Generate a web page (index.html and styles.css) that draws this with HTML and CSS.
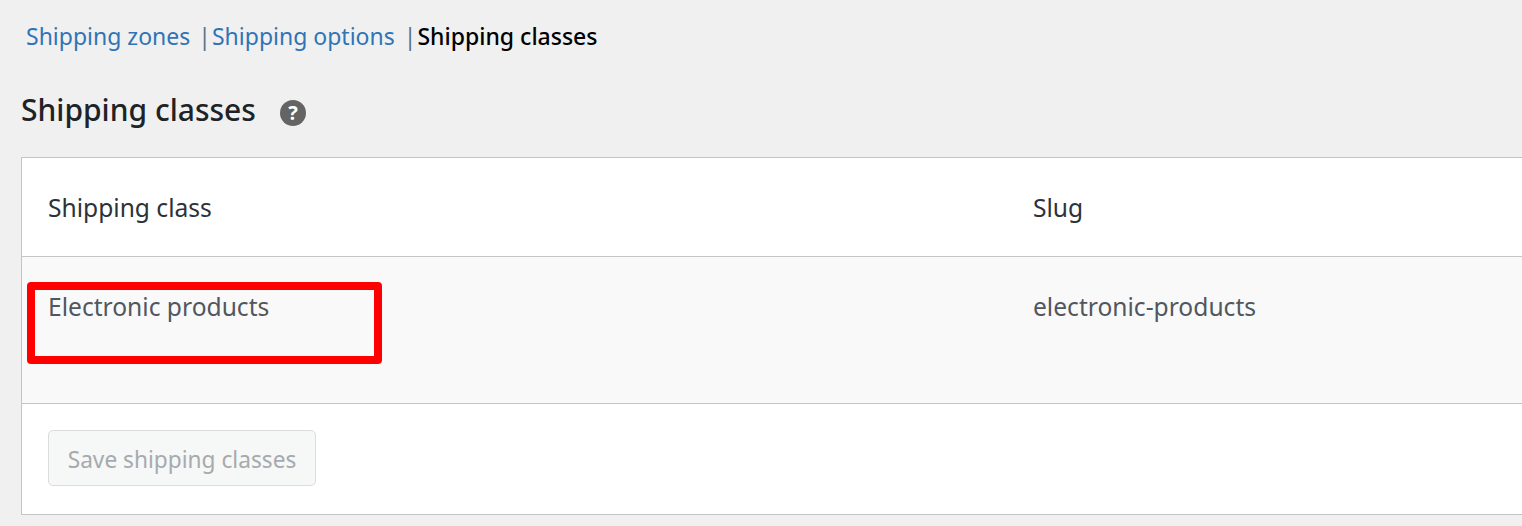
FILE: index.html
```html
<!DOCTYPE html>
<html lang="en">
<head>
<meta charset="utf-8">
<title>Shipping classes</title>
<link rel="stylesheet" href="styles.css">
</head>
<body>
<main class="page">
  <nav class="subnav">
    <a class="subnav-link" href="#">Shipping zones</a>
    <span class="sep sep-first">|</span>
    <a class="subnav-link" href="#">Shipping options</a>
    <span class="sep sep-second">|</span>
    <strong class="current">Shipping classes</strong>
  </nav>
  <header class="heading">
    <h2 class="title">Shipping classes</h2>
    <svg class="help" viewBox="0 0 26 26" aria-hidden="true">
      <circle cx="13" cy="13" r="13" fill="#646464"/>
      <text class="help-mark" x="13" y="20" text-anchor="middle">?</text>
    </svg>
  </header>
  <section class="panel">
    <div class="row row-head">
      <div class="cell cell-name">Shipping class</div>
      <div class="cell">Slug</div>
    </div>
    <div class="row row-body">
      <div class="cell cell-name">Electronic products</div>
      <div class="cell">electronic-products</div>
      <div class="highlight"></div>
    </div>
    <div class="row-foot">
      <button class="save" type="button" disabled>Save shipping classes</button>
    </div>
  </section>
</main>
</body>
</html>
```
FILE: styles.css
```css
* { box-sizing: border-box; }
html, body { margin: 0; height: 100%; }
body {
  width: 1522px;
  height: 526px;
  overflow: hidden;
  background: #f0f0f1;
  font-family: "Noto Sans", "Open Sans", sans-serif;
  font-size: 23px;
  color: #3c434a;
}
.page { padding: 20px 0 0 21px; width: 1500px; }
.subnav { display: flex; align-items: center; height: 34px; padding: 0 0 1px 5px; line-height: 33px; white-space: nowrap; }
.subnav-link { color: #2f74b5; text-decoration: none; }
.sep { color: #5a7288; font-size: 23px; }
.sep-first { margin: 0 1px 0 8px; }
.sep-second { margin: 0 1px 0 9px; }
.current { color: #000; font-weight: 500; }
.heading { display: flex; align-items: center; height: 40px; margin-top: 36px; }
.title { margin: 0; font-size: 30px; font-weight: 500; line-height: 40px; color: #1d2327; }
.help { width: 26px; height: 26px; margin: 5px 0 0 24px; }
.help-mark { font-family: "Noto Sans", sans-serif; font-size: 20px; font-weight: 700; fill: #fff; }
.panel { margin-top: 27px; width: 1501px; background: #fff; border: 1px solid #c3c4c7; border-right: 0; }
.row { position: relative; display: grid; grid-template-columns: 985px 1fr; padding-left: 26px; font-size: 24.6px; }
.row-head { height: 98px; align-items: center; color: #2c3338; }
.row-body { height: 148px; background: #f9f9f9; border-top: 1px solid #c3c4c7; border-bottom: 1px solid #c3c4c7; padding-top: 33px; color: #50575e; line-height: 34px; }
.highlight { position: absolute; left: 5px; top: 25px; width: 355px; height: 82px; border: 8px solid #f00; border-radius: 4px; }
.row-foot { height: 110px; padding: 26px 0 0 26px; }
.save { display: block; width: 268px; height: 56px; padding: 2px 0 0; border: 1px solid #dcdcde; border-radius: 5px; background: #f6f7f7; color: #a7aaad; font: inherit; font-size: 22.7px; }
```
